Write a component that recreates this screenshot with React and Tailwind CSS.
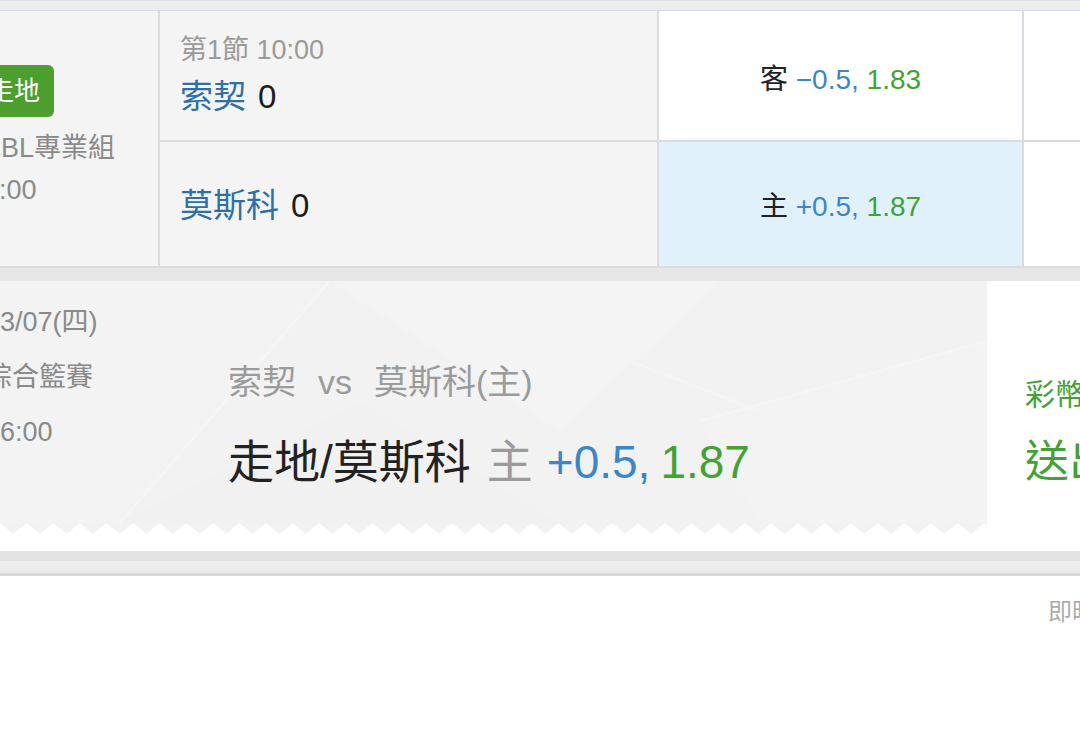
import React from "react";

const zigzag = (width, period, depth) => {
  const pts = ["0,0"];
  for (let x = 0; x < width; x += period) {
    pts.push(`${x + period / 2},${depth}`);
    pts.push(`${Math.min(x + period, width)},0`);
  }
  return pts.join(" ");
};

const Odds = ({ side, line, price }) => (
  <span className="text-[28px] leading-[34px]">
    <span className="text-[#222]">{side}</span>{" "}
    <span className="text-[#3b86c8]">{line},</span>{" "}
    <span className="text-[#43a233]">{price}</span>
  </span>
);

const App = () => {
  return (
    <div className="w-[1080px] h-[749px] overflow-hidden bg-white font-['Liberation_Sans','Noto_Sans_CJK_TC',sans-serif]">
      {/* top strip */}
      <div className="h-[11px] bg-[#ececec] border-t border-t-[#dde3ea] border-b border-b-[#d6dce2]" />

      {/* match row */}
      <div className="flex h-[257px] border-b-2 border-[#dcdcdc]">
        <div className="w-[160px] shrink-0 bg-[#f4f4f4] border-r-2 border-[#dcdcdc] overflow-hidden">
          <div className="-ml-[26px] flex flex-col items-start pt-[54px]">
            <span className="h-[52px] px-[14px] flex items-center rounded-[6px] bg-[#4c9e2f] text-white text-[26px] whitespace-nowrap">
              走地
            </span>
            <span className="mt-[13px] text-[27px] leading-[36px] text-[#8a8a8a] whitespace-nowrap">
              俄BL專業組
            </span>
            <span className="-ml-[5px] mt-[6px] text-[27px] leading-[36px] text-[#8a8a8a] whitespace-nowrap">
              16:00
            </span>
          </div>
        </div>

        <div className="w-[499px] shrink-0 flex flex-col border-r-2 border-[#d9dde1]">
          <div className="h-[131px] bg-[#f4f4f4] border-b-2 border-[#d9dde1] pl-[20px] pt-[23px] flex flex-col">
            <span className="text-[27px] leading-[32px] text-[#9a9a9a]">第1節 10:00</span>
            <span className="mt-[11px] text-[33px] leading-[40px]">
              <span className="text-[#2f6fa7]">索契</span>
              <span className="ml-[12px] text-[#1c1c1c]">0</span>
            </span>
          </div>
          <div className="flex-1 bg-[#f4f4f4] pl-[20px] flex items-center">
            <span className="text-[33px] leading-[40px] pt-[4px]">
              <span className="text-[#2f6fa7]">莫斯科</span>
              <span className="ml-[12px] text-[#1c1c1c]">0</span>
            </span>
          </div>
        </div>

        <div className="w-[365px] shrink-0 flex flex-col border-r-2 border-[#d9dde1]">
          <div className="h-[131px] bg-white border-b-2 border-[#d9dde1] flex items-center justify-center pt-[8px]">
            <Odds side="客" line="−0.5" price="1.83" />
          </div>
          <div className="flex-1 bg-[#e1f1fb] flex items-center justify-center pt-[6px]">
            <Odds side="主" line="+0.5" price="1.87" />
          </div>
        </div>

        <div className="flex-1 flex flex-col">
          <div className="h-[131px] bg-white border-b-2 border-[#d9dde1]" />
          <div className="flex-1 bg-white" />
        </div>
      </div>

      <div className="h-[13px] bg-[#e6e6e6]" />

      {/* ticket */}
      <div className="flex h-[270px] bg-white">
        <div className="w-[987px] shrink-0 flex flex-col">
          <div className="relative h-[242px] bg-[#f2f2f2] overflow-hidden flex">
            <svg className="absolute inset-0" width="987" height="242" viewBox="0 0 987 242">
              <polygon points="0,0 330,0 120,242 0,242" fill="#f3f3f3" />
              <polygon points="330,0 720,0 560,150" fill="#f4f4f4" />
              <polygon points="120,242 360,120 560,242" fill="#f1f1f1" />
              <polygon points="700,140 987,60 987,242 760,242" fill="#f3f3f3" />
              <line x1="330" y1="0" x2="120" y2="242" stroke="#f6f6f6" strokeWidth="2" />
              <line x1="420" y1="0" x2="760" y2="130" stroke="#f5f5f5" strokeWidth="2" />
              <line x1="700" y1="140" x2="987" y2="60" stroke="#f6f6f6" strokeWidth="2" />
            </svg>
            <div className="relative w-[228px] shrink-0 overflow-hidden">
              <div className="-ml-[15px] pt-[23px] flex flex-col gap-[19px] text-[27px] leading-[36px] text-[#8a8a8a] whitespace-nowrap">
                <span>03/07(四)</span>
                <span>綜合籃賽</span>
                <span>16:00</span>
              </div>
            </div>
            <div className="relative flex flex-col pt-[79px] whitespace-nowrap">
              <span className="text-[34px] leading-[44px] text-[#9b9b9b]">
                索契<span className="mx-[22px]">vs</span>莫斯科(主)
              </span>
              <span className="mt-[30px] text-[46px] leading-[56px] text-[#222]">
                走地/莫斯科<span className="ml-[16px] text-[#9b9b9b]">主</span>
                <span className="ml-[14px] text-[#3b86c8]">+0.5,</span>
                <span className="ml-[10px] text-[#43a233]">1.87</span>
              </span>
            </div>
          </div>
          <svg width="987" height="12" viewBox="0 0 987 12" className="block">
            <polygon points={zigzag(987, 26.6, 11)} fill="#f2f2f2" />
          </svg>
        </div>
        <div className="flex-1 pl-[38px] pt-[94px] flex flex-col whitespace-nowrap text-[#43a233] overflow-hidden">
          <span className="text-[30px] leading-[40px]">彩幣</span>
          <span className="mt-[19px] text-[44px] leading-[56px]">送出</span>
        </div>
      </div>

      {/* divider band */}
      <div className="flex flex-col">
        <div className="h-[10px] bg-[#e3e3e3]" />
        <div className="h-[12px] bg-[#ececec]" />
        <div className="h-[3px] bg-[#d8d9dd]" />
      </div>

      <div className="flex justify-end pt-[18px] overflow-hidden">
        <span className="w-[32px] overflow-hidden whitespace-nowrap text-[24px] leading-[36px] text-[#ababab]">
          即時比分
        </span>
      </div>
    </div>
  );
};

export default App;
